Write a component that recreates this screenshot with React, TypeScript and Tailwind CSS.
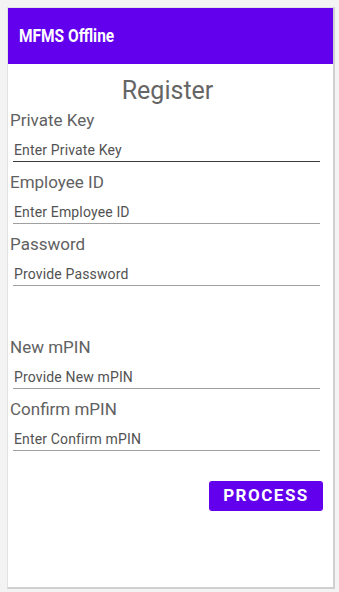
import React from "react"

const fields = [
  { label: "Private Key", placeholder: "Enter Private Key", focused: true },
  { label: "Employee ID", placeholder: "Enter Employee ID" },
  { label: "Password", placeholder: "Provide Password", gapAfter: true },
  { label: "New mPIN", placeholder: "Provide New mPIN" },
  { label: "Confirm mPIN", placeholder: "Enter Confirm mPIN" },
]

function Field({ label, placeholder, focused, gapAfter }: { label: string; placeholder: string; focused?: boolean; gapAfter?: boolean }) {
  return (
    <div className={gapAfter ? "mb-[51px]" : "mb-[10px]"}>
      <div className="ml-[2px] text-[17px] leading-[20px] text-[#616161]">{label}</div>
      <input
        placeholder={placeholder}
        className={`ml-[5px] block h-[32px] w-[307px] border-b bg-transparent pl-[1px] pt-[9px] text-[14px] leading-[20px] tracking-[0.15px] outline-none placeholder:text-[#525252] ${focused ? "border-[#3a3a3a]" : "border-[#a0a0a0]"}`}
      />
    </div>
  )
}

export default function App() {
  return (
    <div className="h-[592px] w-[339px] bg-[#f3f3f3] pb-[3px] pl-[7px] pr-[4px] pt-[7px] font-['Roboto',sans-serif]">
      <div className="flex h-full flex-col border-b-2 border-l border-r-2 border-t border-b-[#d0d0d0] border-l-[#e2e2e2] border-r-[#d0d0d0] border-t-[#e2e2e2] bg-white">
        <div className="flex h-[56px] items-center bg-[#6200ee] pl-[11px]">
          <span className="inline-block origin-left scale-x-[0.86] text-[18px] font-bold leading-[24px] text-white">MFMS Offline</span>
        </div>
        <div className="mt-[12px] pr-[6px] text-center text-[25px] leading-[30px] text-[#666666]">Register</div>
        <div className="mt-[4px]">
          {fields.map((f) => (
            <Field key={f.label} {...f} />
          ))}
        </div>
        <div className="mt-[20px] flex justify-end pr-[10px]">
          <button className="h-[30px] w-[114px] rounded-[3px] bg-[#6200ee] text-[17px] font-bold tracking-[1.5px] text-white">PROCESS</button>
        </div>
      </div>
    </div>
  )
}
